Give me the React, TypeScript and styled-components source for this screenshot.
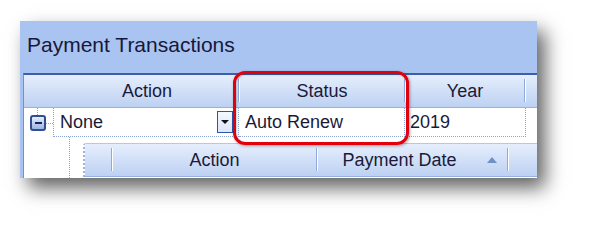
import styled, { createGlobalStyle } from "styled-components";

const GlobalStyle = createGlobalStyle`
  html, body {
    margin: 0;
    padding: 0;
    background: #ffffff;
  }
  body {
    font-family: "Liberation Sans", Arial, sans-serif;
  }
`;

const Page = styled.div`
  width: 591px;
  height: 231px;
  background: #ffffff;
  padding: 21px 0 0 20px;
  box-sizing: border-box;
  overflow: hidden;
`;

const Panel = styled.div`
  position: relative;
  width: 517px;
  height: 157px;
  background: #a9c4f0;
  box-shadow: 8px 10px 18px rgba(0, 0, 0, 0.62);
  display: flex;
  flex-direction: column;
  overflow: hidden;
  color: #1a1a38;
`;

const TitleBar = styled.div`
  height: 52px;
  flex: none;
  box-sizing: border-box;
  padding: 12px 0 0 7px;
  font-size: 21px;
  line-height: 24px;
  color: #17173a;
`;

const Grid = styled.div`
  flex: 1;
  margin-left: 3px;
  border-left: 1px solid #6f92d2;
  border-top: 2px solid #3b5fab;
  background: #ffffff;
  display: flex;
  flex-direction: column;
  min-height: 0;
`;

const HeaderRow = styled.div`
  height: 33px;
  flex: none;
  display: flex;
  box-sizing: border-box;
  border-bottom: 1px solid #97b2e2;
  background: linear-gradient(#e6eefc 0%, #d3e1f8 45%, #bdd1f2 100%);
  font-size: 18px;
`;

const HeaderCell = styled.div<{ $w?: number; $indent?: number }>`
  ${(p) => (p.$w ? `width: ${p.$w}px; flex: none;` : "flex: 1;")}
  box-sizing: border-box;
  padding-left: ${(p) => p.$indent ?? 0}px;
  display: flex;
  align-items: center;
  justify-content: center;
  white-space: nowrap;
`;

const Separator = styled.div`
  width: 1px;
  flex: none;
  margin: 4px 0 5px;
  background: #8eaadc;
  border-right: 1px solid #ffffff;
`;

const DataRow = styled.div`
  height: 29px;
  flex: none;
  display: flex;
  font-size: 18px;
`;

const IndentCell = styled.div`
  width: 29px;
  flex: none;
  display: flex;
  flex-direction: column;
  padding-left: 6px;
  box-sizing: border-box;
`;

const VConnector = styled.div<{ $h: number }>`
  width: 0;
  height: ${(p) => p.$h}px;
  margin-left: 7px;
  border-left: 1px dotted #8ea5d8;
`;

const BoxRow = styled.div`
  display: flex;
  align-items: center;
`;

const ExpandBox = styled.div`
  width: 16px;
  height: 16px;
  flex: none;
  box-sizing: border-box;
  border: 2px solid #304f92;
  border-radius: 3px;
  background: linear-gradient(#e3ecfb, #9bb5e6);
  display: flex;
  align-items: center;
  justify-content: center;

  &::before {
    content: "";
    width: 7px;
    height: 2px;
    background: #1a2750;
  }
`;

const HConnector = styled.div`
  width: 7px;
  border-top: 1px dotted #8ea5d8;
`;

const DataCell = styled.div<{ $w: number; $pad: number; $leftLine?: boolean }>`
  width: ${(p) => p.$w}px;
  flex: none;
  box-sizing: border-box;
  padding-left: ${(p) => p.$pad}px;
  border-right: 1px dotted #8ea5d8;
  border-bottom: 1px dotted #8ea5d8;
  ${(p) => (p.$leftLine ? "border-left: 1px dotted #8ea5d8;" : "")}
  display: flex;
  align-items: center;
  white-space: nowrap;
`;

const CellText = styled.span<{ $center?: boolean }>`
  flex: 1;
  text-align: ${(p) => (p.$center ? "center" : "left")};
`;

const DropButton = styled.div`
  width: 16px;
  height: 22px;
  flex: none;
  margin-right: 5px;
  box-sizing: border-box;
  border: 1px solid #2f55a4;
  background: linear-gradient(#f4f8ff, #dbe6f8);
  display: flex;
  align-items: center;
  justify-content: center;

  &::before {
    content: "";
    border-left: 4px solid transparent;
    border-right: 4px solid transparent;
    border-top: 4px solid #111111;
  }
`;

const DetailArea = styled.div`
  flex: 1;
  display: flex;
  padding-left: 45px;
  min-height: 0;
`;

const DetailConnector = styled.div`
  width: 0;
  border-left: 1px dotted #8ea5d8;
`;

const NestedGrid = styled.div`
  flex: 1;
  margin: 6px 0 0 13px;
  border-left: 2px dotted #9bb1de;
  border-top: 1px solid #b3c7ea;
  border-top-left-radius: 3px;
  display: flex;
  flex-direction: column;
`;

const SortArrow = styled.div`
  width: 0;
  height: 0;
  flex: none;
  margin: 0 10px 0 6px;
  border-left: 5px solid transparent;
  border-right: 5px solid transparent;
  border-bottom: 6px solid #7090c6;
`;

const Highlight = styled.div`
  position: absolute;
  left: 213px;
  top: 50px;
  width: 176px;
  height: 74px;
  box-sizing: border-box;
  border: 3px solid #e2000d;
  border-radius: 12px;
  box-shadow: 1px 1px 3px rgba(0, 0, 0, 0.35), inset 1px 1px 2px rgba(0, 0, 0, 0.2);
`;

export default function App() {
  return (
    <>
      <GlobalStyle />
      <Page>
        <Panel>
          <TitleBar>Payment Transactions</TitleBar>
          <Grid>
            <HeaderRow>
              <HeaderCell $w={214} $indent={32}>
                Action
              </HeaderCell>
              <Separator />
              <HeaderCell $w={164}>Status</HeaderCell>
              <Separator />
              <HeaderCell $w={118}>Year</HeaderCell>
              <Separator />
              <HeaderCell />
            </HeaderRow>
            <DataRow>
              <IndentCell>
                <VConnector $h={7} />
                <BoxRow>
                  <ExpandBox />
                  <HConnector />
                </BoxRow>
              </IndentCell>
              <DataCell $w={186} $pad={6} $leftLine>
                <CellText>None</CellText>
                <DropButton />
              </DataCell>
              <DataCell $w={166} $pad={6}>
                Auto Renew
              </DataCell>
              <DataCell $w={121} $pad={5}>
                2019
              </DataCell>
            </DataRow>
            <DetailArea>
              <DetailConnector />
              <NestedGrid>
                <HeaderRow>
                  <HeaderCell $w={26} />
                  <Separator />
                  <HeaderCell $w={203}>Action</HeaderCell>
                  <Separator />
                  <HeaderCell $w={189}>
                    <CellText $center>Payment Date</CellText>
                    <SortArrow />
                  </HeaderCell>
                  <Separator />
                  <HeaderCell />
                </HeaderRow>
              </NestedGrid>
            </DetailArea>
          </Grid>
          <Highlight />
        </Panel>
      </Page>
    </>
  );
}
